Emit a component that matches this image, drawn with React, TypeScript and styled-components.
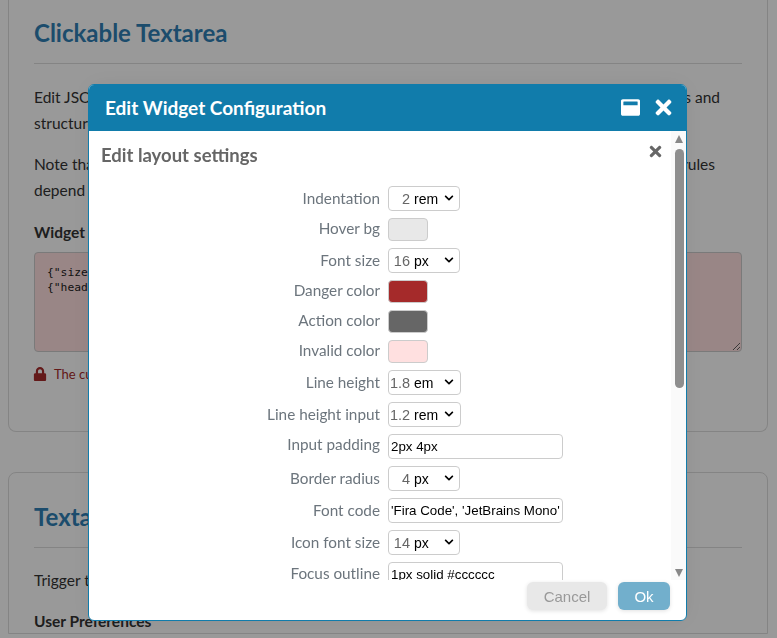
import React from 'react'
import styled, { createGlobalStyle } from 'styled-components'
import { FaLock, FaTimes, FaWindowMaximize, FaChevronDown } from 'react-icons/fa'

const GlobalStyle = createGlobalStyle`
  html, body {
    margin: 0;
    padding: 0;
    height: 100%;
    overflow: hidden;
    background: #fff;
  }
`

const Page = styled.div`
  height: 638px;
  overflow: hidden;
  padding: 0 9px 0 8px;
  font-family: 'Lato', sans-serif;
  font-size: 15.5px;
  color: #333;
`

const Card = styled.section<{ $first?: boolean }>`
  border: 1px solid #ddd;
  border-top: ${(p) => (p.$first ? 'none' : '1px solid #ddd')};
  border-radius: ${(p) => (p.$first ? '0 0 8px 8px' : '8px 8px 0 0')};
  padding: ${(p) => (p.$first ? '17px 25px 0' : '28px 25px 0')};
  height: ${(p) => (p.$first ? '432px' : 'auto')};
  margin-bottom: 40px;
  box-sizing: border-box;
`

const Heading = styled.h2`
  margin: 0;
  padding-bottom: 14px;
  border-bottom: 1px solid #ddd;
  color: #2f7fb5;
  font-size: 24px;
  line-height: 32px;
  font-weight: 700;
`

const Line = styled.div<{ $top?: number; $end?: number }>`
  display: flex;
  justify-content: space-between;
  padding-right: ${(p) => p.$end ?? 22}px;
  margin-top: ${(p) => p.$top ?? 0}px;
  line-height: 26px;
  white-space: nowrap;
`

const Strong = styled.div<{ $top: number }>`
  margin-top: ${(p) => p.$top}px;
  font-weight: 700;
  line-height: 24px;
`

const Code = styled.textarea`
  display: block;
  width: 100%;
  height: 100px;
  margin-top: 8px;
  padding: 12px 12px;
  box-sizing: border-box;
  border: 1px solid #ccc;
  border-radius: 4px;
  background: #ffe0e0;
  color: #222;
  font-family: 'DejaVu Sans Mono', monospace;
  font-size: 11.3px;
  line-height: 15px;
  white-space: pre;
  overflow: hidden;
  resize: vertical;
`

const Notice = styled.div`
  display: flex;
  align-items: center;
  gap: 7px;
  margin-top: 13px;
  margin-left: -1px;
  color: #a52a2a;
  font-size: 13px;
  line-height: 18px;
  svg {
    font-size: 14px;
  }
`

const Overlay = styled.div`
  position: fixed;
  inset: 0;
  padding: 84px 90px 17px 88px;
  background: rgba(0, 0, 0, 0.4);
`

const Modal = styled.div`
  height: 100%;
  display: flex;
  flex-direction: column;
  box-sizing: border-box;
  border: 1px solid #117cab;
  border-radius: 6px;
  background: #fff;
  overflow: hidden;
  box-shadow: 0 0 24px rgba(0, 0, 0, 0.06);
  font-family: 'Lato', sans-serif;
`

const Header = styled.header`
  flex: none;
  height: 46px;
  display: flex;
  align-items: center;
  box-sizing: border-box;
  padding: 0 11px 2px 16px;
  background: #117cab;
  color: #fff;
`

const Title = styled.h1`
  flex: 1;
  margin: 0;
  font-size: 19px;
  font-weight: 700;
`

const HeaderIcon = styled.span<{ $size: number; $gap?: number }>`
  display: flex;
  margin-left: ${(p) => p.$gap ?? 0}px;
  font-size: ${(p) => p.$size}px;
`

const Body = styled.div`
  flex: 1;
  min-height: 0;
  display: flex;
`

const Content = styled.div`
  position: relative;
  flex: 1;
  min-width: 0;
  overflow: hidden;
  padding: 13px 0 0 12px;
`

const SubTitle = styled.h3`
  margin: 0 0 20px;
  height: 22px;
  color: #666;
  font-size: 18.5px;
  line-height: 22px;
  font-weight: 700;
`

const Dismiss = styled.span`
  position: absolute;
  top: 12px;
  right: 7px;
  display: flex;
  color: #666;
  font-size: 17px;
`

const Form = styled.div`
  display: grid;
  grid-template-columns: 279px 1fr;
  column-gap: 8px;
  row-gap: 7px;
  align-items: center;
`

const Label = styled.label<{ $lift: number }>`
  text-align: right;
  color: #6c757d;
  font-size: 15.3px;
  line-height: 16px;
  padding-bottom: ${(p) => p.$lift}px;
`

const SelectBox = styled.div<{ $wide?: boolean }>`
  position: relative;
  display: flex;
  align-items: center;
  box-sizing: border-box;
  width: ${(p) => (p.$wide ? 73 : 72)}px;
  height: 25px;
  padding-left: 1px;
  border: 1px solid #ccc;
  border-radius: 4px;
  font-family: 'Liberation Sans', sans-serif;
  font-size: 14px;
`

const Amount = styled.span`
  width: 20px;
  text-align: right;
  color: #666;
  font-size: 14.5px;
`

const Unit = styled.span`
  margin-left: 4px;
  color: #000;
`

const Chevron = styled.span<{ $wide?: boolean }>`
  position: absolute;
  right: ${(p) => (p.$wide ? 6 : 5)}px;
  top: 6px;
  display: flex;
  color: #000;
  font-size: 10px;
`

const Swatch = styled.div<{ $color: string }>`
  box-sizing: border-box;
  width: 40px;
  height: 23px;
  border: 1px solid #ccc;
  border-radius: 4px;
  background: ${(p) => p.$color};
`

const TextInput = styled.input`
  display: block;
  box-sizing: border-box;
  width: 175px;
  height: 25px;
  padding: 2px;
  border: 1px solid #ccc;
  border-radius: 4px;
  color: #000;
  font-family: 'Liberation Sans', sans-serif;
  font-size: 13.33px;
  outline: none;
`

const Rail = styled.div`
  flex: none;
  position: relative;
  width: 15px;
  background: #fafafa;
`

const Arrow = styled.span<{ $down?: boolean }>`
  position: absolute;
  left: 4px;
  ${(p) => (p.$down ? 'bottom: 3px;' : 'top: 4px;')}
  width: 0;
  height: 0;
  border-left: 4.5px solid transparent;
  border-right: 4.5px solid transparent;
  ${(p) => (p.$down ? 'border-top: 8px solid #888;' : 'border-bottom: 8px solid #888;')}
`

const Thumb = styled.div`
  position: absolute;
  left: 4px;
  top: 18px;
  width: 9px;
  height: 239px;
  border-radius: 5px;
  background: #8e8e8e;
`

const Footer = styled.footer`
  flex: none;
  height: 40px;
  display: flex;
  justify-content: flex-end;
  gap: 11px;
  padding: 2px 16px 0 0;
  box-sizing: border-box;
`

const Button = styled.button<{ $primary?: boolean }>`
  height: 28px;
  width: ${(p) => (p.$primary ? 52 : 80)}px;
  border: none;
  border-radius: 6px;
  background: ${(p) => (p.$primary ? '#72afcc' : '#e8e8e8')};
  color: ${(p) => (p.$primary ? '#fff' : '#999')};
  font-family: 'Liberation Sans', sans-serif;
  font-size: 15px;
  box-shadow: 0 1px 4px rgba(0, 0, 0, 0.12);
`

type Field =
  | { label: string; lift: number; kind: 'select'; amount: string; unit: string; wide?: boolean }
  | { label: string; lift: number; kind: 'color'; color: string }
  | { label: string; lift: number; kind: 'text'; value: string }

const fields: Field[] = [
  { label: 'Indentation', lift: 2, kind: 'select', amount: '2', unit: 'rem' },
  { label: 'Hover bg', lift: 4, kind: 'color', color: '#e8e8e8' },
  { label: 'Font size', lift: 2, kind: 'select', amount: '16', unit: 'px' },
  { label: 'Danger color', lift: 4, kind: 'color', color: '#a52a2a' },
  { label: 'Action color', lift: 4, kind: 'color', color: '#666666' },
  { label: 'Invalid color', lift: 4, kind: 'color', color: '#ffe0e0' },
  { label: 'Line height', lift: 2, kind: 'select', amount: '1.8', unit: 'em', wide: true },
  { label: 'Line height input', lift: 2, kind: 'select', amount: '1.2', unit: 'rem', wide: true },
  { label: 'Input padding', lift: 5, kind: 'text', value: '2px 4px' },
  { label: 'Border radius', lift: 2, kind: 'select', amount: '4', unit: 'px' },
  { label: 'Font code', lift: 2, kind: 'text', value: "'Fira Code', 'JetBrains Mono'" },
  { label: 'Icon font size', lift: 2, kind: 'select', amount: '14', unit: 'px' },
  { label: 'Focus outline', lift: 4, kind: 'text', value: '1px solid #cccccc' },
]

function Control({ field }: { field: Field }) {
  if (field.kind === 'color') return <Swatch $color={field.color} />
  if (field.kind === 'text') return <TextInput readOnly value={field.value} />
  return (
    <SelectBox $wide={field.wide}>
      <Amount>{field.amount}</Amount>
      <Unit>{field.unit}</Unit>
      <Chevron $wide={field.wide}>
        <FaChevronDown />
      </Chevron>
    </SelectBox>
  )
}

export default function App() {
  return (
    <>
      <GlobalStyle />
      <Page>
        <Card $first>
          <Heading>Clickable Textarea</Heading>
          <Line $top={20}>
            <span>Edit JSON configuration for the widget</span>
            <span>fields and</span>
          </Line>
          <Line>
            <span>structured editing.</span>
          </Line>
          <Line $top={15} $end={27}>
            <span>Note that the configuration is locked</span>
            <span>rules</span>
          </Line>
          <Line>
            <span>depend on the schema.</span>
          </Line>
          <Strong $top={17}>Widget Configuration</Strong>
          <Code readOnly value={'{"size":"large"}\n{"header":true}'} />
          <Notice>
            <FaLock />
            <span>The current value is read only</span>
          </Notice>
        </Card>
        <Card>
          <Heading>Textarea Trigger</Heading>
          <Line $top={19}>
            <span>Trigger the editor from the button.</span>
          </Line>
          <Strong $top={16}>User Preferences</Strong>
        </Card>
      </Page>
      <Overlay>
        <Modal>
          <Header>
            <Title>Edit Widget Configuration</Title>
            <HeaderIcon $size={19}>
              <FaWindowMaximize />
            </HeaderIcon>
            <HeaderIcon $size={23} $gap={12}>
              <FaTimes />
            </HeaderIcon>
          </Header>
          <Body>
            <Content>
              <SubTitle>Edit layout settings</SubTitle>
              <Dismiss>
                <FaTimes />
              </Dismiss>
              <Form>
                {fields.map((field) => (
                  <React.Fragment key={field.label}>
                    <Label $lift={field.lift}>{field.label}</Label>
                    <Control field={field} />
                  </React.Fragment>
                ))}
              </Form>
            </Content>
            <Rail>
              <Arrow />
              <Thumb />
              <Arrow $down />
            </Rail>
          </Body>
          <Footer>
            <Button>Cancel</Button>
            <Button $primary>Ok</Button>
          </Footer>
        </Modal>
      </Overlay>
    </>
  )
}
